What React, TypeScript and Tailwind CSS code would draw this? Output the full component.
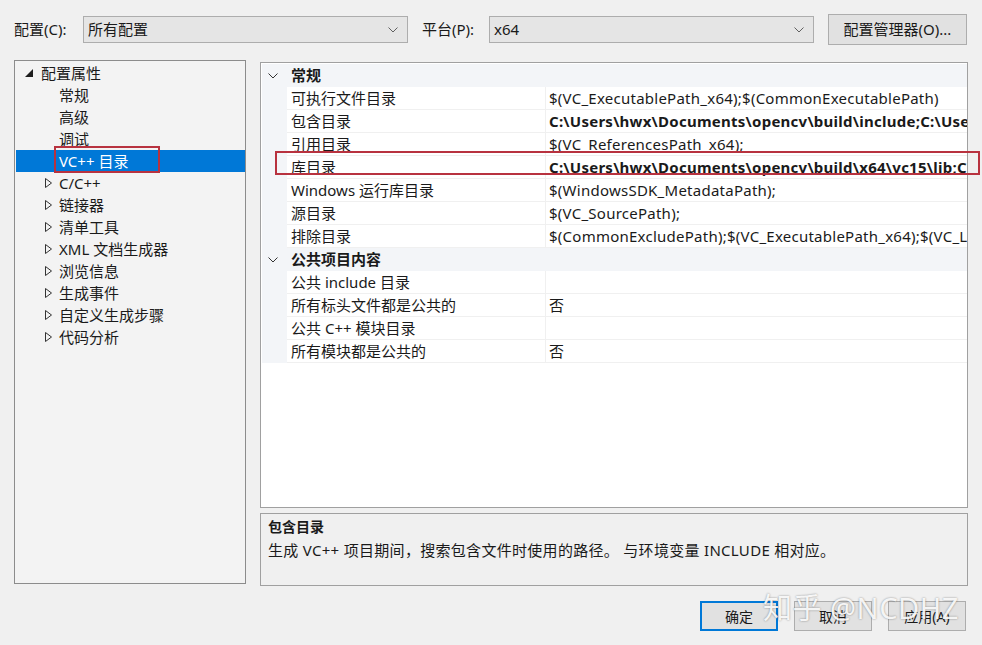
import React from 'react';

const font = { fontFamily: '"Noto Sans", "Noto Sans CJK SC", sans-serif' };

const treeItems = [
  { label: '常规', kind: 'leaf' },
  { label: '高级', kind: 'leaf' },
  { label: '调试', kind: 'leaf' },
  { label: 'VC++ 目录', kind: 'leaf', selected: true },
  { label: 'C/C++', kind: 'group' },
  { label: '链接器', kind: 'group' },
  { label: '清单工具', kind: 'group' },
  { label: 'XML 文档生成器', kind: 'group' },
  { label: '浏览信息', kind: 'group' },
  { label: '生成事件', kind: 'group' },
  { label: '自定义生成步骤', kind: 'group' },
  { label: '代码分析', kind: 'group' },
];

type Row = { name: string; value: string; bold?: boolean; marked?: boolean };

const sections: { title: string; rows: Row[] }[] = [
  {
    title: '常规',
    rows: [
      { name: '可执行文件目录', value: '$(VC_ExecutablePath_x64);$(CommonExecutablePath)' },
      { name: '包含目录', value: 'C:\\Users\\hwx\\Documents\\opencv\\build\\include;C:\\Users\\hwx', bold: true },
      { name: '引用目录', value: '$(VC_ReferencesPath_x64);' },
      { name: '库目录', value: 'C:\\Users\\hwx\\Documents\\opencv\\build\\x64\\vc15\\lib;C:\\Users', bold: true, marked: true },
      { name: 'Windows 运行库目录', value: '$(WindowsSDK_MetadataPath);' },
      { name: '源目录', value: '$(VC_SourcePath);' },
      { name: '排除目录', value: '$(CommonExcludePath);$(VC_ExecutablePath_x64);$(VC_LibraryPath_x64)' },
    ],
  },
  {
    title: '公共项目内容',
    rows: [
      { name: '公共 include 目录', value: '' },
      { name: '所有标头文件都是公共的', value: '否' },
      { name: '公共 C++ 模块目录', value: '' },
      { name: '所有模块都是公共的', value: '否' },
    ],
  },
];

function Chevron({ className }: { className?: string }) {
  return (
    <svg width="10" height="6" viewBox="0 0 10 6" className={className}>
      <polyline points="0.5,0.5 5,5 9.5,0.5" fill="none" stroke="currentColor" strokeWidth="1" />
    </svg>
  );
}

function Combo({ value, width }: { value: string; width: string }) {
  return (
    <div className={`${width} h-[27px] flex items-center justify-between bg-[#e5e5e5] border border-[#adadad] pl-[4px] pr-[9px]`}>
      <span className="text-[15px] text-[#1a1a1a]">{value}</span>
      <Chevron className="text-[#606060]" />
    </div>
  );
}

function Button({ label, primary }: { label: string; primary?: boolean }) {
  return (
    <div
      className={`w-[78px] h-[30px] flex items-center justify-center bg-[#e1e1e1] text-[14px] text-[#1a1a1a] ${
        primary ? 'border-2 border-[#0078d7]' : 'border border-[#adadad]'
      }`}
    >
      {label}
    </div>
  );
}

export default function App() {
  return (
    <div style={font} className="relative w-[982px] h-[645px] bg-[#f0f0f0] overflow-hidden text-[#1a1a1a]">
      {/* top toolbar */}
      <div className="h-[60px] flex items-center pl-[14px] pb-[1px]">
        <span className="text-[15px] w-[69px]">配置(C):</span>
        <Combo value="所有配置" width="w-[325px]" />
        <span className="text-[15px] ml-[14px] w-[67px]">平台(P):</span>
        <Combo value="x64" width="w-[325px]" />
        <div className="ml-[14px] w-[139px] h-[31px] flex items-center justify-center bg-[#e1e1e1] border border-[#adadad] text-[15px]">
          配置管理器(O)...
        </div>
      </div>

      <div className="flex items-start pl-[14px] gap-[14px]">
        {/* tree */}
        <div className="w-[232px] h-[524px] bg-[#f3f3f3] border border-[#8c8c8c] pt-[1px] pl-[1px]">
          <div className="h-[22px] flex items-center">
            <svg width="8" height="8" viewBox="0 0 8 8" className="ml-[9px] mr-[8px]">
              <polygon points="8,0 8,8 0,8" fill="#1e1e1e" />
            </svg>
            <span className="text-[15px]">配置属性</span>
          </div>
          {treeItems.map((it) => (
            <div
              key={it.label}
              className={`relative h-[22px] flex items-center w-[229px] ${it.selected ? 'bg-[#0078d7] text-white' : ''}`}
            >
              {it.kind === 'group' ? (
                <svg width="7" height="10" viewBox="0 0 7 10" className="ml-[29px] mr-[7px]">
                  <polygon points="0.5,0.5 6.5,5 0.5,9.5" fill="none" stroke="#333" strokeWidth="1" />
                </svg>
              ) : (
                <span className="w-[43px]" />
              )}
              <span className="text-[15px] whitespace-nowrap">{it.label}</span>
              {it.selected && (
                <div className="absolute left-[38px] top-[-4px] w-[106px] h-[27px] border-2 border-[#b8323f]" />
              )}
            </div>
          ))}
        </div>

        {/* right column */}
        <div className="flex flex-col gap-[5px] pt-[2px]">
          <div className="relative w-[708px] h-[446px] bg-white border border-[#a0a0a0] pt-[1px] pl-[1px]">
            {sections.map((sec) => (
              <div key={sec.title}>
                <div className="h-[23px] flex items-center bg-[#f3f5f8] w-[705px]">
                  <Chevron className="ml-[6px] mr-[13px] text-[#333]" />
                  <span className="text-[15px] font-bold">{sec.title}</span>
                </div>
                {sec.rows.map((r) => (
                  <div key={r.name} className="relative flex h-[23px] w-[705px] bg-[#f3f5f8]">
                    <div className="ml-[25px] w-[258px] flex items-center bg-white border-b border-[#f0f0f0] pl-[4px] text-[15px] whitespace-nowrap">
                      {r.name}
                    </div>
                    <div
                      className={`flex-1 flex items-center bg-white border-b border-l border-[#f0f0f0] pl-[3px] text-[15px] tracking-[0.25px] whitespace-nowrap overflow-hidden ${
                        r.bold ? 'font-bold' : ''
                      }`}
                    >
                      {r.value}
                    </div>
                    {r.marked && (
                      <div className="absolute left-[13px] top-[-5px] w-[705px] h-[24px] border-2 border-[#b8323f]" />
                    )}
                  </div>
                ))}
              </div>
            ))}
          </div>

          <div className="w-[708px] h-[73px] bg-[#f0f0f0] border border-[#a0a0a0] px-[7px] pt-[2px]">
            <div className="text-[14px] font-bold leading-[22px]">包含目录</div>
            <div className="text-[15px] tracking-[0.3px] leading-[24px]">生成 VC++ 项目期间，搜索包含文件时使用的路径。 与环境变量 INCLUDE 相对应。</div>
          </div>
        </div>
      </div>

      {/* dialog buttons */}
      <div className="flex justify-end gap-[16px] pr-[16px] mt-[15px]">
        <Button label="确定" primary />
        <Button label="取消" />
        <Button label="应用(A)" />
      </div>

      {/* watermark */}
      <div className="absolute left-[763px] top-[586px] text-[29px] tracking-[0.5px] text-white/90 whitespace-nowrap [text-shadow:0_0_2px_rgba(0,0,0,0.45)]">
        知乎 @NCDHZ
      </div>
    </div>
  );
}
